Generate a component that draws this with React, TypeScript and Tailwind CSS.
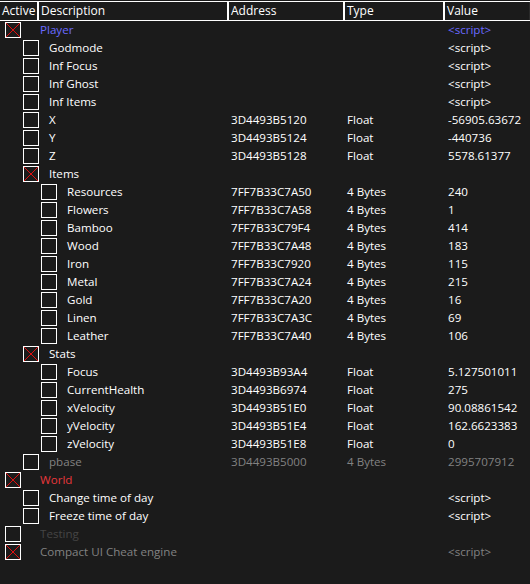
const rows: {
  level: number;
  desc: string;
  addr?: string;
  type?: string;
  value?: string;
  checked?: boolean;
  tone?: 'blue' | 'red' | 'grey' | 'dim';
}[] = [
  { level: 0, desc: 'Player', value: '<script>', checked: true, tone: 'blue' },
  { level: 1, desc: 'Godmode', value: '<script>' },
  { level: 1, desc: 'Inf Focus', value: '<script>' },
  { level: 1, desc: 'Inf Ghost', value: '<script>' },
  { level: 1, desc: 'Inf Items', value: '<script>' },
  { level: 1, desc: 'X', addr: '3D4493B5120', type: 'Float', value: '-56905.63672' },
  { level: 1, desc: 'Y', addr: '3D4493B5124', type: 'Float', value: '-440736' },
  { level: 1, desc: 'Z', addr: '3D4493B5128', type: 'Float', value: '5578.61377' },
  { level: 1, desc: 'Items', checked: true },
  { level: 2, desc: 'Resources', addr: '7FF7B33C7A50', type: '4 Bytes', value: '240' },
  { level: 2, desc: 'Flowers', addr: '7FF7B33C7A58', type: '4 Bytes', value: '1' },
  { level: 2, desc: 'Bamboo', addr: '7FF7B33C79F4', type: '4 Bytes', value: '414' },
  { level: 2, desc: 'Wood', addr: '7FF7B33C7A48', type: '4 Bytes', value: '183' },
  { level: 2, desc: 'Iron', addr: '7FF7B33C7920', type: '4 Bytes', value: '115' },
  { level: 2, desc: 'Metal', addr: '7FF7B33C7A24', type: '4 Bytes', value: '215' },
  { level: 2, desc: 'Gold', addr: '7FF7B33C7A20', type: '4 Bytes', value: '16' },
  { level: 2, desc: 'Linen', addr: '7FF7B33C7A3C', type: '4 Bytes', value: '69' },
  { level: 2, desc: 'Leather', addr: '7FF7B33C7A40', type: '4 Bytes', value: '106' },
  { level: 1, desc: 'Stats', checked: true },
  { level: 2, desc: 'Focus', addr: '3D4493B93A4', type: 'Float', value: '5.127501011' },
  { level: 2, desc: 'CurrentHealth', addr: '3D4493B6974', type: 'Float', value: '275' },
  { level: 2, desc: 'xVelocity', addr: '3D4493B51E0', type: 'Float', value: '90.08861542' },
  { level: 2, desc: 'yVelocity', addr: '3D4493B51E4', type: 'Float', value: '162.6623383' },
  { level: 2, desc: 'zVelocity', addr: '3D4493B51E8', type: 'Float', value: '0' },
  { level: 1, desc: 'pbase', addr: '3D4493B5000', type: '4 Bytes', value: '2995707912', tone: 'grey' },
  { level: 0, desc: 'World', checked: true, tone: 'red' },
  { level: 1, desc: 'Change time of day', value: '<script>' },
  { level: 1, desc: 'Freeze time of day', value: '<script>' },
  { level: 0, desc: 'Testing', tone: 'dim' },
  { level: 0, desc: 'Compact UI Cheat engine', value: '<script>', checked: true, tone: 'grey' },
];

const toneClass = {
  blue: 'text-[#6a6aff]',
  red: 'text-[#e8383c]',
  grey: 'text-[#828282]',
  dim: 'text-[#454545]',
};

// x offset of the checkbox per tree level
const boxPad = ['pl-[5px]', 'pl-[23px]', 'pl-[41px]'];
const textPad = ['pl-[40px]', 'pl-[49px]', 'pl-[67px]'];

function CheckBox({ checked }: { checked?: boolean }) {
  return (
    <div className="w-4 h-4 border border-white shrink-0">
      {checked && (
        <svg width="14" height="14" viewBox="0 0 14 14" className="block">
          <path d="M0 0L14 14M14 0L0 14" stroke="#e01010" strokeWidth="1" />
        </svg>
      )}
    </div>
  );
}

export default function App() {
  return (
    <div
      className="w-[530px] h-[584px] bg-[#1b1b1b] text-white text-[11.6px] overflow-hidden"
      style={{ fontFamily: '"Open Sans", "Noto Sans", sans-serif' }}
    >
      <div className="pt-px">
        {/* header */}
        <div className="grid grid-cols-[39px_190px_116px_100px_1fr] h-[20px] border-t border-b border-white leading-[18px] text-[12px]">
          <div className="pl-[2px] border-r-2 border-white">Active</div>
          <div className="pl-[2px] border-r-2 border-white">Description</div>
          <div className="pl-[2px] border-r-2 border-white">Address</div>
          <div className="pl-[2px] border-r-2 border-white">Type</div>
          <div className="pl-[2px] border-r border-[#2a2a2a]">Value</div>
        </div>

        {/* rows */}
        <div>
          {rows.map((r, i) => {
            const tone = r.tone ? toneClass[r.tone] : 'text-white';
            const valTone = r.tone === 'red' ? 'text-white' : tone;
            return (
              <div key={i} className="relative h-[18px] leading-[18px]">
                <div className={`absolute top-px left-0 ${boxPad[r.level]}`}>
                  <CheckBox checked={r.checked} />
                </div>
                <div className="grid grid-cols-[231px_116px_101px_1fr] whitespace-nowrap">
                  <div className={`${textPad[r.level]} ${tone}`}>{r.desc}</div>
                  <div className={tone}>{r.addr}</div>
                  <div className={tone}>{r.type}</div>
                  <div className={valTone}>{r.value}</div>
                </div>
              </div>
            );
          })}
        </div>
      </div>
    </div>
  );
}
